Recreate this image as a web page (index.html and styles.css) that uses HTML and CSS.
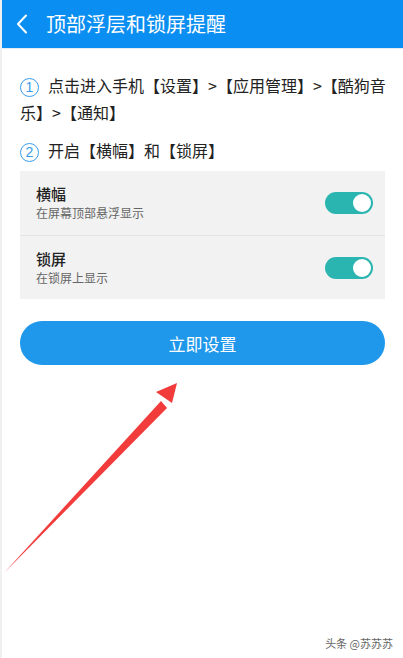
FILE: index.html
```html
<!DOCTYPE html>
<html lang="zh-CN">
<head>
  <meta charset="UTF-8" />
  <meta name="viewport" content="width=device-width, initial-scale=1.0"/>
  <title>顶部浮层和锁屏提醒</title>
  <link rel="stylesheet" href="styles.css">
</head>
<body>
  <div class="page">
    <header class="topbar">
      <svg class="back" width="12" height="20" viewBox="0 0 12 20">
        <path d="M10 1.5 L2 10 L10 18.5" fill="none" stroke="#fff" stroke-width="2" stroke-linecap="round" stroke-linejoin="round"/>
      </svg>
      <h1>顶部浮层和锁屏提醒</h1>
    </header>

    <div class="content">
      <p class="step"><span class="num">1</span>点击进入手机【设置】&gt;【应用管理】&gt;【酷狗音<br>乐】&gt;【通知】</p>
      <p class="step step2"><span class="num">2</span>开启【横幅】和【锁屏】</p>

      <div class="card">
        <div class="row">
          <div class="row-text">
            <div class="row-title">横幅</div>
            <div class="row-sub">在屏幕顶部悬浮显示</div>
          </div>
          <div class="toggle"><span class="knob"></span></div>
        </div>
        <div class="row">
          <div class="row-text">
            <div class="row-title">锁屏</div>
            <div class="row-sub">在锁屏上显示</div>
          </div>
          <div class="toggle"><span class="knob"></span></div>
        </div>
      </div>

      <button class="setup">立即设置</button>
    </div>

    <!-- 红色指示箭头 -->
    <svg class="arrow" width="180" height="200" viewBox="0 0 180 200">
      <path d="M2 193 L159 21 L165 28 Z" fill="#f23b3b"/>
      <path d="M154 12 L175 3 L170 23 Z" fill="#f23b3b"/>
    </svg>

    <div class="mark">头条 @苏苏苏</div>
  </div>
</body>
</html>
```

FILE: styles.css
```css
* {
  box-sizing: border-box;
}

body {
  margin: 0;
  background: #fff;
  font-family: "Noto Sans CJK SC", "Noto Sans", sans-serif;
  color: #222;
}

.page {
  position: relative;
  width: 403px;
  height: 658px;
  overflow: hidden;
  border-left: 2px solid #f0f0f0;
}

.topbar {
  height: 49px;
  background: #0b8ef1;
  display: flex;
  align-items: center;
  padding-left: 14px;
  border-bottom: 1px solid #e3eef8;
}

.back {
  display: block;
}

.topbar h1 {
  margin: 0 0 0 18px;
  font-size: 20px;
  font-weight: normal;
  color: #fff;
  line-height: 24px;
}

.content {
  padding: 23px 18px 0 18px;
}

.step {
  margin: 0;
  font-size: 16px;
  line-height: 27px;
  color: #222;
  white-space: nowrap;
}

.step2 {
  margin-top: 11px;
}

.num {
  display: inline-block;
  width: 19px;
  height: 19px;
  border: 1.5px solid #3a9de9;
  border-radius: 50%;
  color: #3a9de9;
  font-family: "Liberation Sans", sans-serif;
  font-size: 14px;
  line-height: 16px;
  text-align: center;
  vertical-align: 0;
  margin-right: 9px;
}

.card {
  margin-top: 7px;
  background: #f2f2f2;
}

.row {
  height: 64px;
  display: flex;
  align-items: center;
  justify-content: space-between;
  padding: 0 12px 0 16px;
}

.row + .row {
  border-top: 1px solid #e4e4e4;
}

.row-title {
  font-size: 15px;
  line-height: 18px;
  font-weight: 500;
  color: #222;
}

.row-sub {
  margin-top: 2px;
  font-size: 12px;
  line-height: 16px;
  color: #666;
}

.toggle {
  width: 48px;
  height: 22px;
  border-radius: 11px;
  background: #2ab5b0;
  display: flex;
  justify-content: flex-end;
  align-items: center;
  padding-right: 2px;
}

.knob {
  width: 18px;
  height: 18px;
  border-radius: 50%;
  background: #fff;
}

.setup {
  display: block;
  width: 100%;
  height: 44px;
  margin-top: 22px;
  border: none;
  border-radius: 22px;
  background: #1f97ea;
  color: #fff;
  font-family: inherit;
  font-size: 17px;
}

.arrow {
  position: absolute;
  left: 0;
  top: 380px;
}

.mark {
  position: absolute;
  right: 10px;
  bottom: 7px;
  font-size: 11px;
  color: #666;
}
```
